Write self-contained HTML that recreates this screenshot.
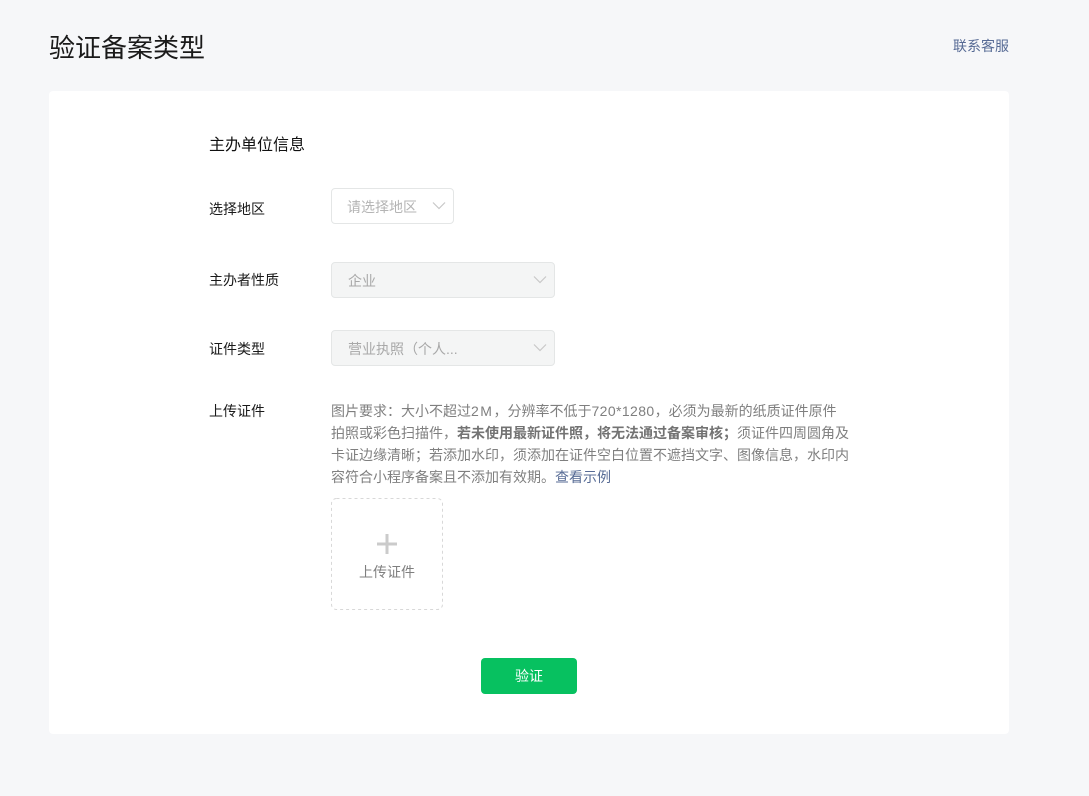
<!DOCTYPE html>
<html lang="zh-CN">
<head>
<meta charset="utf-8">
<title>验证备案类型</title>
<style>
html,body{margin:0;padding:0;width:1089px;height:796px;overflow:hidden;background:#f6f7f9;}
body{position:relative;font-family:"Liberation Sans","Noto Sans CJK SC",sans-serif;color:#1a1a1a;}
.a{position:absolute;white-space:nowrap;}
.card{left:49px;top:91px;width:960px;height:643px;background:#fff;border-radius:4px;}
.title{left:49px;top:28.5px;font-size:26px;line-height:38px;color:#1a1a1a;}
.contact{left:953px;top:36px;font-size:14px;line-height:20px;color:#576b95;}
.section{left:209px;top:135px;font-size:16px;line-height:22px;color:#111;}
.label{left:209px;font-size:14px;line-height:20px;color:#1a1a1a;}
.sel{left:331px;box-sizing:border-box;height:36px;border:1px solid #e4e6e6;border-radius:4px;background:#fff;}
.sel.dis{background:#f4f5f5;width:224px;}
.sel span{position:absolute;left:16px;top:1px;line-height:34px;font-size:14px;color:#b4b4b4;}
.sel.dis span{color:#a8a8a8;}
.sel svg{position:absolute;top:13px;width:14px;height:10px;}
.desc{left:331px;font-size:14px;line-height:22px;color:#7f7f7f;}
.desc b{font-weight:700;color:#737373;}
.desc a{color:#576b95;text-decoration:none;}
.up{left:331px;top:498px;width:112px;height:112px;}
.plus{left:377px;top:534px;width:20px;height:20px;}
.uptxt{left:331px;width:112px;top:562px;text-align:center;font-size:14px;line-height:20px;color:#7f7f7f;}
.btn{left:481px;top:658px;width:96px;height:36px;background:#07c160;border-radius:4px;color:#fff;font-size:14px;line-height:36px;text-align:center;}
</style>
</head>
<body>
<div class="a title">验证备案类型</div>
<div class="a contact">联系客服</div>
<div class="a card"></div>
<div class="a section">主办单位信息</div>

<div class="a label" style="top:199px">选择地区</div>
<div class="a sel" style="top:188px;width:123px"><span style="left:15px">请选择地区</span>
<svg style="left:100px" viewBox="0 0 14 10"><path d="M1 .5 L7 6.5 L13 .5" fill="none" stroke="#c8c8c8" stroke-width="1.2"/></svg></div>

<div class="a label" style="top:270px">主办者性质</div>
<div class="a sel dis" style="top:262px"><span>企业</span>
<svg style="left:201px" viewBox="0 0 14 10"><path d="M1 .5 L7 6.5 L13 .5" fill="none" stroke="#c8c8c8" stroke-width="1.2"/></svg></div>

<div class="a label" style="top:339px">证件类型</div>
<div class="a sel dis" style="top:330px"><span>营业执照（个人...</span>
<svg style="left:201px" viewBox="0 0 14 10"><path d="M1 .5 L7 6.5 L13 .5" fill="none" stroke="#c8c8c8" stroke-width="1.2"/></svg></div>

<div class="a label" style="top:401px">上传证件</div>
<div class="a desc" style="top:400px">图片要求：大小不超过<span style="letter-spacing:1.5px">2M</span>，分辨率不低于<span style="letter-spacing:.4px">720*1280</span>，必须为最新的纸质证件原件</div>
<div class="a desc" style="top:422px">拍照或彩色扫描件，<b>若未使用最新证件照，将无法通过备案审核；</b>须证件四周圆角及</div>
<div class="a desc" style="top:444px">卡证边缘清晰；若添加水印，须添加在证件空白位置不遮挡文字、图像信息，水印内</div>
<div class="a desc" style="top:466px">容符合小程序备案且不添加有效期。<a>查看示例</a></div>

<svg class="a up" viewBox="0 0 112 112"><rect x=".5" y=".5" width="111" height="111" rx="5" ry="5" fill="none" stroke="#d8d8d8" stroke-dasharray="3 3"/></svg>
<svg class="a plus" viewBox="0 0 20 20"><path d="M0 8.5H20V11.5H0Z M8.5 0H11.5V20H8.5Z" fill="#cbcbcb"/></svg>
<div class="a uptxt">上传证件</div>

<div class="a btn">验证</div>
</body>
</html>
